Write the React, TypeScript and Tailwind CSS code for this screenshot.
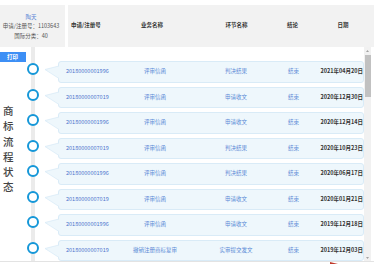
import React from "react";

const rows = [
  ["20180000001996", "评审信函", "判决结果", "结束", "2021年04月20日"],
  ["20180000007019", "评审信函", "申请收文", "结束", "2020年12月30日"],
  ["20180000001996", "评审信函", "申请收文", "结束", "2020年12月14日"],
  ["20180000007019", "评审信函", "判决结果", "结束", "2020年10月23日"],
  ["20180000001996", "评审信函", "判决结果", "结束", "2020年06月17日"],
  ["20180000007019", "评审信函", "申请收文", "结束", "2020年01月21日"],
  ["20180000001996", "评审信函", "申请收文", "结束", "2019年12月18日"],
  ["20180000007019", "撤销注册商标复审", "实审提交发文", "结束", "2019年12月03日"],
];

function Row({ r }: { r: string[] }) {
  return (
    <div className="flex h-[21.5px] shrink-0">
      <div className="w-[14px] flex justify-center pt-[2px]">
        <div className="w-[12px] h-[12px] rounded-full border-[2px] border-[#1597d8] bg-white" />
      </div>
      <svg width="19" height="21.5" viewBox="0 0 19 21.5" className="relative z-10 mr-[-1px] overflow-visible">
        <polygon points="5,8.5 19,5 19,17.5" fill="#eef7fc" />
        <polyline points="19,5 5,8.5 19,17.5" fill="none" stroke="#d9ebf7" strokeWidth="0.8" />
      </svg>
      <div className="flex-1 flex items-center rounded-[3px] border border-[#d9ebf7] bg-[#eef7fc] text-[5.5px] leading-none">
        <div className="w-[56px] pl-[7px] text-[#4d73cc]">{r[0]}</div>
        <div className="w-[80px] text-center text-[#5b8ad6]">{r[1]}</div>
        <div className="w-[82px] text-center text-[#5b8ad6]">{r[2]}</div>
        <div className="w-[33px] text-center text-[#5b8ad6]">{r[3]}</div>
        <div className="flex-1 text-right font-bold text-[#333] whitespace-nowrap">{r[4]}</div>
      </div>
    </div>
  );
}

export default function App() {
  return (
    <div className="w-[374px] h-[264px] bg-white overflow-hidden font-['Noto_Sans_CJK_SC','Liberation_Sans',sans-serif]">
      <div className="h-[5px]" />
      <div className="flex h-[42px]">
        <div className="w-[65px] bg-[#f2f2f2] flex flex-col items-center justify-center gap-[3.5px] text-[5.5px] leading-[6px] text-[#555] pr-[3px]">
          <div className="text-[#5b84d6]">陶天</div>
          <div className="whitespace-nowrap">申请/注册号：1103643</div>
          <div className="whitespace-nowrap">国际分类：40</div>
        </div>
        <div className="w-[3px]" />
        <div className="flex-1 bg-[#f2f2f2] flex items-center text-[5.5px] leading-none font-bold text-[#333]">
          <div className="w-[44px] pl-[3px] whitespace-nowrap">申请/注册号</div>
          <div className="w-[80px] text-center">业务名称</div>
          <div className="w-[89px] text-center">环节名称</div>
          <div className="w-[23px] text-center">结论</div>
          <div className="w-[42px] ml-[18px] text-center">日期</div>
        </div>
      </div>
      <div className="flex h-[214px]">
        <div className="w-[364px] flex">
          <div className="w-[26px] flex flex-col">
            <div className="mt-[4.7px] h-[10.3px] bg-[#3d8ff5] text-white text-[5.5px] font-bold leading-[10.3px] pl-[7px]">打印</div>
            <div className="mt-[41px] pl-[3px] flex flex-col text-[10.5px] leading-[15.3px] font-medium text-[#444]">
              {"商标流程状态".split("").map((c, i) => (
                <div key={i}>{c}</div>
              ))}
            </div>
          </div>
          <div className="flex-1 flex flex-col gap-[4px] pt-[14px] bg-[linear-gradient(to_right,transparent_5px,#ebebeb_5px,#ebebeb_9px,transparent_9px)]">
            {rows.map((r, i) => (
              <Row key={i} r={r} />
            ))}
          </div>
        </div>
        <div className="w-[7px] bg-[#f1f1f1] flex flex-col items-center">
          <svg width="5" height="4" viewBox="0 0 5 4" className="mt-[2px]">
            <polygon points="2.5,1 4,3 1,3" fill="#a3a3a3" />
          </svg>
          <div className="mt-[2px] w-[6px] h-[42px] bg-[#c1c1c1]" />
          <div className="flex-1" />
          <svg width="5" height="4" viewBox="0 0 5 4" className="mb-[1px]">
            <polygon points="1,1 4,1 2.5,3" fill="#a3a3a3" />
          </svg>
        </div>
      </div>
      <div className="h-[3px] flex border-t border-[#e3e3e3]">
        <div className="w-[330px]" />
        <svg width="14" height="3" viewBox="0 0 14 3">
          <polygon points="0,0 12,3 0,3" fill="#c0392b" />
        </svg>
      </div>
    </div>
  );
}
